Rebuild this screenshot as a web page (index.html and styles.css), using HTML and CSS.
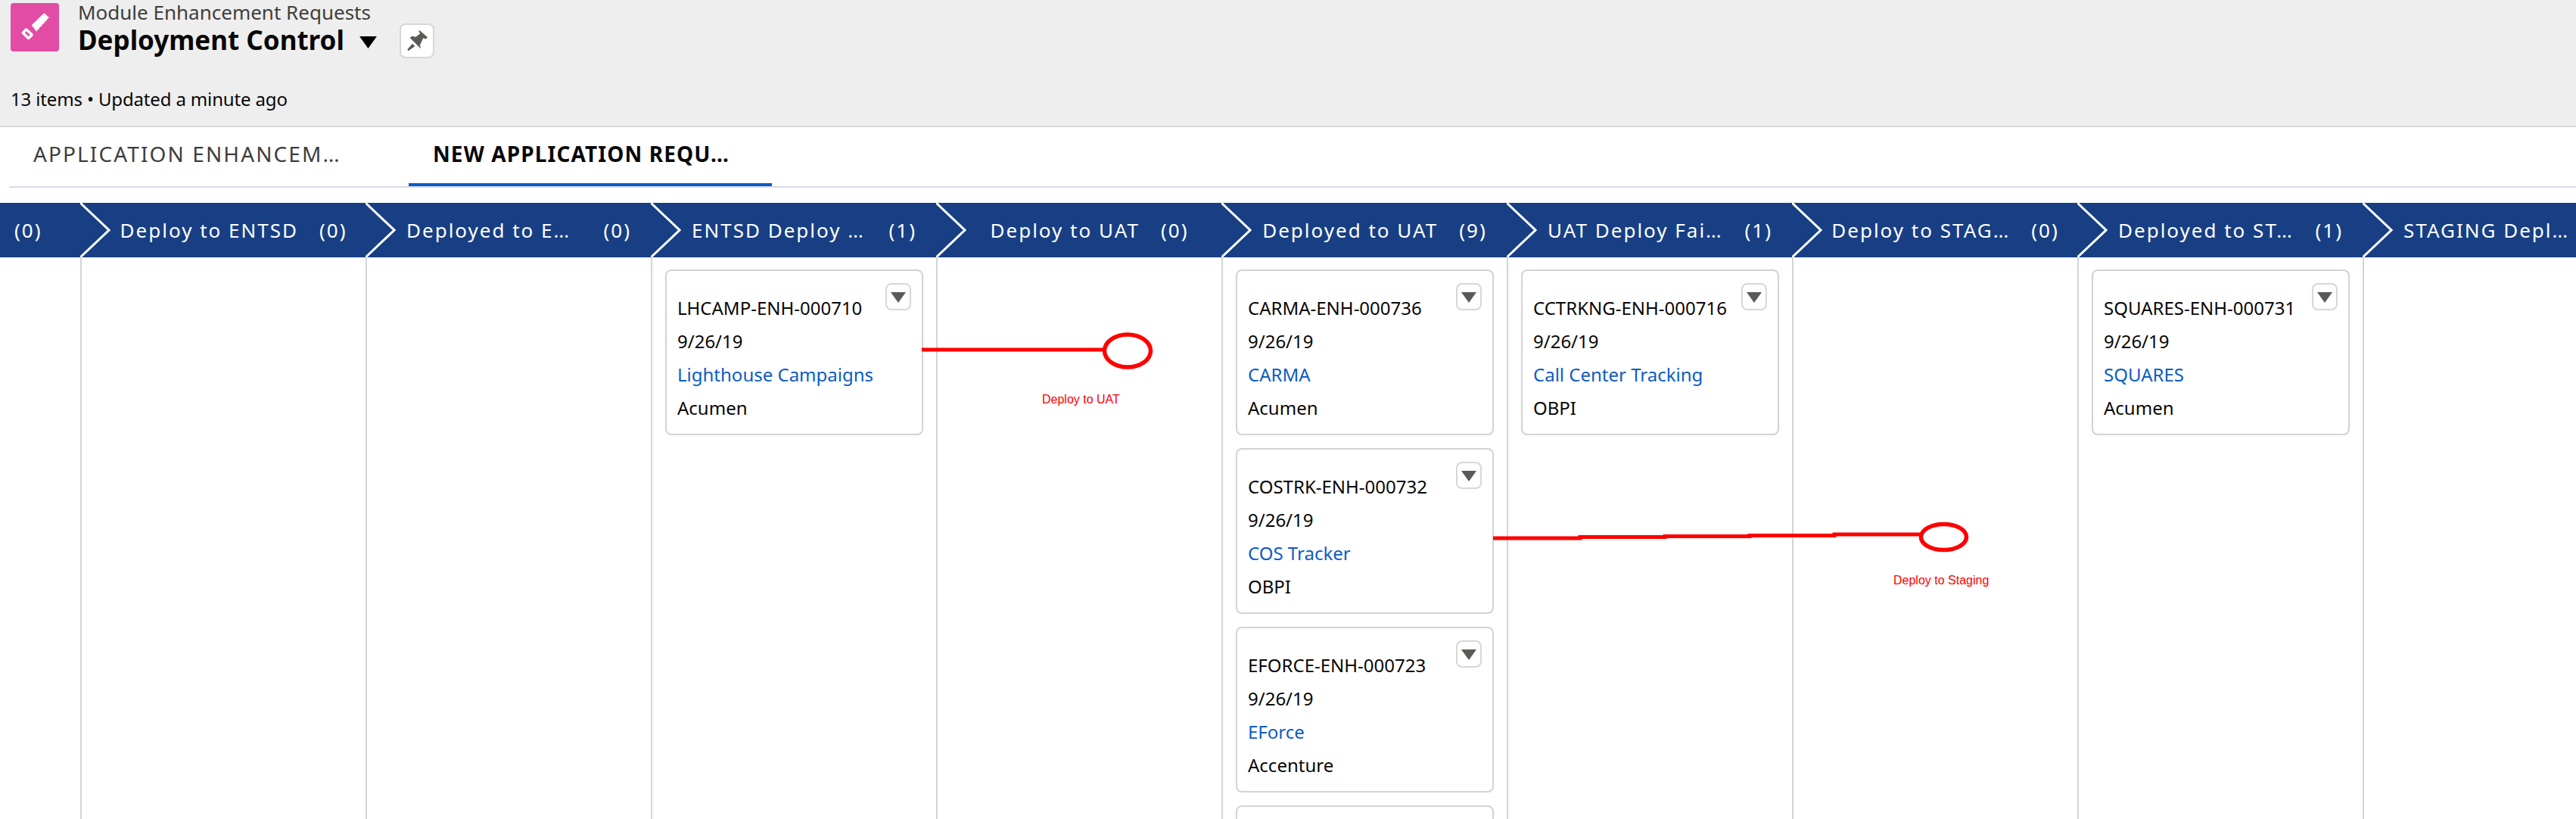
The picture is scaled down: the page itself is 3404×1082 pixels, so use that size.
FILE: index.html
```html
<!DOCTYPE html>
<html lang="en">
<head>
    <meta charset="UTF-8">
    <title>Deployment Control</title>
    <link rel="stylesheet" href="styles.css">
</head>
<body>
    <svg class="defs" width="0" height="0">
        <symbol id="chevron" viewBox="0 0 40 72">
            <path d="M0 0 L38 36 L0 72" fill="none" stroke="#fff" stroke-width="3"/>
        </symbol>
        <symbol id="caret" viewBox="0 0 20 14">
            <path d="M0 0 H20 L10 14 Z"/>
        </symbol>
    </svg>

    <header class="list-header">
        <div class="title-row">
            <span class="app-icon">
                <svg width="64" height="64" viewBox="0 0 64 64">
                    <path d="M27.700 29.300 L44.300 13.300 L51 19.300 L48.500 21 L47.700 23 L45.200 24.700 L44.300 26.700 L41.800 28.400 L41 30.400 L38.500 32 L37.700 34 L35.200 35.700 L34.300 37.700 Z" fill="#fff"/>
                    <rect x="17" y="37.500" width="10.500" height="6.500" rx="1" transform="rotate(44 22.300 40.700)" fill="none" stroke="#fff" stroke-width="3.500"/>
                </svg>
            </span>
            <div class="titles">
                <div class="object-name">Module Enhancement Requests</div>
                <div class="view-name">
                    <h1>Deployment Control</h1>
                    <svg class="view-caret" width="23" height="16"><use href="#caret"/></svg>
                    <button class="pin-btn">
                        <svg width="28" height="28" viewBox="0 0 28 28">
                            <path d="M17.300 0 L28 9.300 L25.700 11.700 L22.300 10.300 L18 19.300 L19 24.300 L4.700 10 L7.300 7.700 L12.300 8.700 L18.300 4.300 L16.300 1.700 Z" fill="#5c5a56"/>
                            <path d="M8 17.700 L1.300 25.300 L2.700 27.300 L11.300 21 Z" fill="#5c5a56"/>
                        </svg>
                    </button>
                </div>
            </div>
        </div>
        <div class="list-meta">13 items • Updated a minute ago</div>
    </header>

    <nav class="tabs">
        <a class="tab">APPLICATION ENHANCEM…</a>
        <a class="tab active">NEW APPLICATION REQU…</a>
    </nav>

    <div class="path">
        <div class="stage stage-first"><span class="stage-count">(0)</span></div>
        <div class="stage">
            <svg class="chevron"><use href="#chevron"/></svg>
            <span class="stage-name">Deploy to ENTSD</span><span class="stage-count">(0)</span>
        </div>
        <div class="stage">
            <svg class="chevron"><use href="#chevron"/></svg>
            <span class="stage-name cut">Deployed to E…</span><span class="stage-count">(0)</span>
        </div>
        <div class="stage">
            <svg class="chevron"><use href="#chevron"/></svg>
            <span class="stage-name cut">ENTSD Deploy …</span><span class="stage-count">(1)</span>
        </div>
        <div class="stage">
            <svg class="chevron"><use href="#chevron"/></svg>
            <span class="stage-name">Deploy to UAT</span><span class="stage-count">(0)</span>
        </div>
        <div class="stage">
            <svg class="chevron"><use href="#chevron"/></svg>
            <span class="stage-name">Deployed to UAT</span><span class="stage-count">(9)</span>
        </div>
        <div class="stage">
            <svg class="chevron"><use href="#chevron"/></svg>
            <span class="stage-name cut">UAT Deploy Fai…</span><span class="stage-count">(1)</span>
        </div>
        <div class="stage">
            <svg class="chevron"><use href="#chevron"/></svg>
            <span class="stage-name cut">Deploy to STAG…</span><span class="stage-count">(0)</span>
        </div>
        <div class="stage">
            <svg class="chevron"><use href="#chevron"/></svg>
            <span class="stage-name cut">Deployed to ST…</span><span class="stage-count">(1)</span>
        </div>
        <div class="stage">
            <svg class="chevron"><use href="#chevron"/></svg>
            <span class="stage-name cut">STAGING Depl…</span>
        </div>
    </div>

    <main class="board">
        <section class="column column-first"></section>
        <section class="column"></section>
        <section class="column"></section>
        <section class="column">
            <article class="card">
                <button class="card-menu"><svg width="20" height="14"><use href="#caret"/></svg></button>
                <div>LHCAMP-ENH-000710</div>
                <div>9/26/19</div>
                <a class="card-link">Lighthouse Campaigns</a>
                <div>Acumen</div>
            </article>
        </section>
        <section class="column"></section>
        <section class="column">
            <article class="card">
                <button class="card-menu"><svg width="20" height="14"><use href="#caret"/></svg></button>
                <div>CARMA-ENH-000736</div>
                <div>9/26/19</div>
                <a class="card-link">CARMA</a>
                <div>Acumen</div>
            </article>
            <article class="card">
                <button class="card-menu"><svg width="20" height="14"><use href="#caret"/></svg></button>
                <div>COSTRK-ENH-000732</div>
                <div>9/26/19</div>
                <a class="card-link">COS Tracker</a>
                <div>OBPI</div>
            </article>
            <article class="card">
                <button class="card-menu"><svg width="20" height="14"><use href="#caret"/></svg></button>
                <div>EFORCE-ENH-000723</div>
                <div>9/26/19</div>
                <a class="card-link">EForce</a>
                <div>Accenture</div>
            </article>
            <article class="card"></article>
        </section>
        <section class="column">
            <article class="card">
                <button class="card-menu"><svg width="20" height="14"><use href="#caret"/></svg></button>
                <div>CCTRKNG-ENH-000716</div>
                <div>9/26/19</div>
                <a class="card-link">Call Center Tracking</a>
                <div>OBPI</div>
            </article>
        </section>
        <section class="column"></section>
        <section class="column">
            <article class="card">
                <button class="card-menu"><svg width="20" height="14"><use href="#caret"/></svg></button>
                <div>SQUARES-ENH-000731</div>
                <div>9/26/19</div>
                <a class="card-link">SQUARES</a>
                <div>Acumen</div>
            </article>
        </section>
        <section class="column"></section>
    </main>

    <!-- red markup drawn over the screenshot -->
    <svg class="markup" width="3404" height="1082" viewBox="0 0 3404 1082">
        <path d="M1218 462 H1458" fill="none" stroke="#fe0000" stroke-width="5"/>
        <ellipse cx="1490" cy="463.500" rx="30.500" ry="21.500" fill="none" stroke="#fe0000" stroke-width="5.500"/>
        <path d="M1973 711 H2088 V709.500 H2200 V708.500 H2312 V707.500 H2424 V706 H2538" fill="none" stroke="#fe0000" stroke-width="5"/>
        <ellipse cx="2568.500" cy="709.500" rx="30" ry="17" fill="none" stroke="#fe0000" stroke-width="5.500"/>
    </svg>
    <span class="markup-label label-uat">Deploy to UAT</span>
    <span class="markup-label label-staging">Deploy to Staging</span>
</body>
</html>
```

FILE: styles.css
```css
html, body {
    margin: 0;
    height: 1082px;
    overflow: hidden;
}
body {
    font-family: "Noto Sans", sans-serif;
    background: #fff;
    color: #080707;
    position: relative;
}
.defs {
    position: absolute;
}

/* list header */
.list-header {
    background: #eeeeee;
    height: 162px;
    border-bottom: 2px solid #d8d6d6;
    padding: 4px 14px 0;
}
.title-row {
    display: flex;
    gap: 25px;
    height: 104px;
}
.app-icon {
    width: 64px;
    height: 64px;
    background: #e24ca5;
    border-radius: 4px;
    flex: none;
}
.app-icon svg {
    display: block;
}
.object-name {
    font-size: 26px;
    line-height: 28px;
    color: #3e3e3c;
    margin-top: -2px;
}
.view-name {
    display: flex;
    align-items: center;
    margin-top: 1px;
}
h1 {
    font-size: 35px;
    line-height: 46px;
    font-weight: 700;
    margin: -3px 0 0;
    color: #080707;
}
.view-caret {
    margin-left: 20px;
    margin-top: 3px;
}
.pin-btn {
    width: 46px;
    height: 46px;
    margin-left: 30px;
    padding: 0;
    background: #fff;
    border: 2px solid #d8d6d6;
    border-radius: 8px;
    display: flex;
    align-items: center;
    justify-content: center;
}
.list-meta {
    font-size: 24px;
    line-height: 30px;
    letter-spacing: -0.150px;
    margin-top: 8px;
}

/* tabs */
.tabs {
    display: flex;
    gap: 48px;
    margin-left: 12px;
    height: 78px;
    border-bottom: 2px solid #d8dde6;
}
.tab {
    width: 480px;
    box-sizing: border-box;
    padding: 10px 32px 0;
    font-size: 28px;
    line-height: 50px;
    letter-spacing: 2.100px;
    color: #3e3e3c;
}
.tab.active {
    color: #080707;
    font-weight: 700;
    letter-spacing: 1.100px;
    border-bottom: 4px solid #0b5cc4;
}

/* sales path */
.path {
    display: flex;
    margin-top: 20px;
    height: 72px;
    background: #183f84;
    color: #fff;
    overflow: hidden;
    font-size: 26px;
    letter-spacing: 2px;
}
.stage {
    position: relative;
    flex: none;
    width: 377px;
    box-sizing: border-box;
    padding: 0 26px 0 54px;
    display: flex;
    align-items: center;
    justify-content: center;
    gap: 28px;
    white-space: nowrap;
}
.stage-first {
    width: 106px;
    padding: 0 0 0 19px;
    justify-content: flex-start;
}
.stage-name.cut {
    flex: 1;
}
.chevron {
    position: absolute;
    left: 0;
    top: 0;
    width: 40px;
    height: 72px;
}

/* columns and cards */
.board {
    display: flex;
    height: 742px;
    overflow: hidden;
}
.column {
    flex: none;
    width: 377px;
    box-sizing: border-box;
    border-left: 2px solid #d4d4d4;
    padding: 16px 0 0 17px;
    display: flex;
    flex-direction: column;
    gap: 17px;
}
.column-first {
    width: 106px;
    border-left: none;
}
.card {
    position: relative;
    flex: none;
    width: 341px;
    height: 219px;
    box-sizing: border-box;
    border: 2px solid #d4d2d2;
    border-radius: 8px;
    padding: 27px 14px 0;
    background: #fff;
    font-size: 24px;
    line-height: 44px;
    color: #080707;
}
.card-link {
    display: block;
    color: #0b5cc4;
}
.card-menu {
    position: absolute;
    top: 16px;
    right: 14px;
    width: 34px;
    height: 36px;
    padding: 2px 0 0;
    background: #fff;
    border: 2px solid #d8d6d6;
    border-radius: 8px;
    display: flex;
    align-items: center;
    justify-content: center;
    fill: #5c5a56;
}

/* red markup */
.markup {
    position: absolute;
    left: 0;
    top: 0;
    pointer-events: none;
}
.markup-label {
    position: absolute;
    font-family: "Liberation Sans", Arial, sans-serif;
    font-size: 16px;
    line-height: 18px;
    color: #fe0000;
    white-space: nowrap;
}
.label-uat {
    left: 1377px;
    top: 519px;
}
.label-staging {
    left: 2502px;
    top: 758px;
}
```
